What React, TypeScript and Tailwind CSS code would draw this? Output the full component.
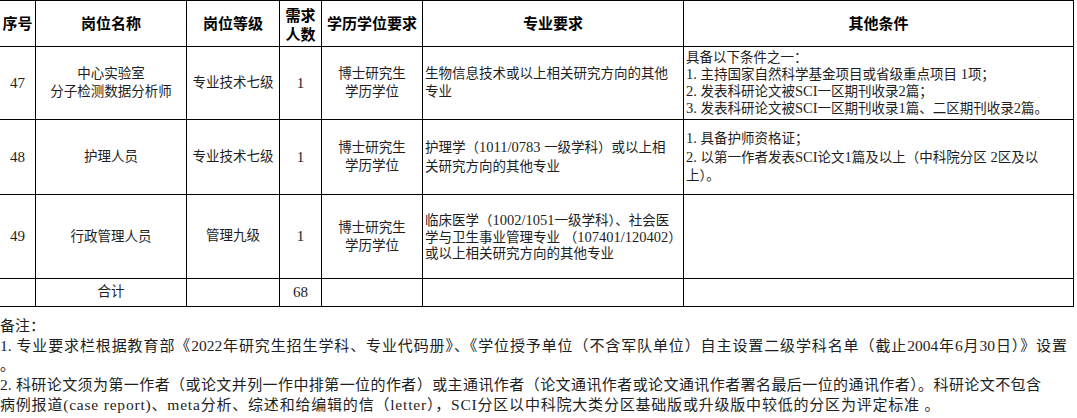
const serif = "font-['Liberation_Serif','Noto_Sans_CJK_SC',serif]";

// half-width latin runs are set a touch larger so they sit level with the CJK text
function Mixed({ text, small }: { text: string; small?: boolean }) {
  const parts = text.split(/([\x20-\x7e]+)/).filter((p) => p !== "");
  return (
    <>
      {parts.map((p, i) =>
        /^[\x20-\x7e]+$/.test(p) ? (
          <span key={i} className={small ? "text-[14.5px] whitespace-pre" : "text-[15.5px] whitespace-pre"}>
            {p}
          </span>
        ) : (
          <span key={i}>{p}</span>
        )
      )}
    </>
  );
}

const rows = [
  {
    no: "47",
    name: ["中心实验室", "分子检测数据分析师"],
    level: "专业技术七级",
    count: "1",
    major: ["生物信息技术或以上相关研究方向的其他", "专业"],
    majorLead: "leading-[18px]",
    other: [
      "具备以下条件之一：",
      "1. 主持国家自然科学基金项目或省级重点项目 1项；",
      "2. 发表科研论文被SCI一区期刊收录2篇；",
      "3. 发表科研论文被SCI一区期刊收录1篇、二区期刊收录2篇。",
    ],
    otherLead: "leading-[16px]",
    h: "h-[73px]",
  },
  {
    no: "48",
    name: ["护理人员"],
    level: "专业技术七级",
    count: "1",
    major: ["护理学（1011/0783 一级学科）或以上相", "关研究方向的其他专业"],
    majorLead: "leading-[19px]",
    other: ["1. 具备护师资格证；", "2. 以第一作者发表SCI论文1篇及以上（中科院分区 2区及以", "上）。"],
    otherLead: "leading-[18px]",
    h: "h-[75px]",
  },
  {
    no: "49",
    name: ["行政管理人员"],
    level: "管理九级",
    count: "1",
    major: [
      "临床医学（1002/1051一级学科）、社会医",
      "学与卫生事业管理专业 （107401/120402）",
      "或以上相关研究方向的其他专业",
    ],
    majorLead: "leading-[16px]",
    other: [],
    otherLead: "leading-[16px]",
    h: "h-[84px]",
  },
];

function Lines({ lines, className = "" }: { lines: string[]; className?: string }) {
  return (
    <div className={className}>
      {lines.map((l, i) => (
        <div key={i} className="whitespace-nowrap">
          <Mixed text={l} small />
        </div>
      ))}
    </div>
  );
}

export default function App() {
  const th = "border border-black font-bold text-center align-middle text-[15px] text-black p-0";
  const td = "border border-black align-middle p-0";

  return (
    <div className={`w-[1077px] h-[418px] overflow-hidden bg-white text-[#1e1e1e] ${serif}`}>
      <table className="-ml-px table-fixed border-collapse w-[1074px]">
        <colgroup>
          <col className="w-[36px]" />
          <col className="w-[151px]" />
          <col className="w-[93px]" />
          <col className="w-[42px]" />
          <col className="w-[101px]" />
          <col className="w-[261px]" />
          <col className="w-[390px]" />
        </colgroup>
        <thead className="font-['Noto_Sans_CJK_SC',sans-serif]">
          <tr className="h-[46px]">
            <th className={th}>序号</th>
            <th className={th}>岗位名称</th>
            <th className={th}>岗位等级</th>
            <th className={`${th} leading-[19px]`}>
              需求
              <br />
              人数
            </th>
            <th className={th}>学历学位要求</th>
            <th className={th}>专业要求</th>
            <th className={th}>其他条件</th>
          </tr>
        </thead>
        <tbody className="text-[13.5px]">
          {rows.map((r) => (
            <tr key={r.no} className={r.h}>
              <td className={`${td} text-center text-[15px]`}>{r.no}</td>
              <td className={`${td} text-center`}>
                <Lines lines={r.name} className="leading-[18px]" />
              </td>
              <td className={`${td} text-center`}>{r.level}</td>
              <td className={`${td} text-center text-[15px]`}>{r.count}</td>
              <td className={`${td} text-center`}>
                <Lines lines={["博士研究生", "学历学位"]} className="leading-[18px]" />
              </td>
              <td className={`${td} pl-[2px]`}>
                <Lines lines={r.major} className={r.majorLead} />
              </td>
              <td className={`${td} pl-[2px]`}>
                <Lines lines={r.other} className={r.otherLead} />
              </td>
            </tr>
          ))}
          <tr className="h-[28px]">
            <td className={td}></td>
            <td className={`${td} text-center`}>合计</td>
            <td className={td}></td>
            <td className={`${td} text-center text-[15px]`}>68</td>
            <td className={td}></td>
            <td className={td}></td>
            <td className={td}></td>
          </tr>
        </tbody>
      </table>

      <div className="mt-[10px] text-[15px] leading-[19px]">
        <div>备注：</div>
        <div className="w-[1067px] text-justify [text-align-last:justify]">
          <Mixed text="1. 专业要求栏根据教育部《2022年研究生招生学科、专业代码册》、《学位授予单位（不含军队单位）自主设置二级学科名单（截止2004年6月30日）》设置" />
        </div>
        <div>。</div>
        <div className="w-[1041px] text-justify [text-align-last:justify]">
          <Mixed text="2. 科研论文须为第一作者（或论文并列一作中排第一位的作者）或主通讯作者（论文通讯作者或论文通讯作者署名最后一位的通讯作者）。科研论文不包含" />
        </div>
        <div className="whitespace-nowrap tracking-[0.8px]">
          <Mixed text="病例报道(case report)、meta分析、综述和给编辑的信（letter），SCI分区以中科院大类分区基础版或升级版中较低的分区为评定标准 。" />
        </div>
      </div>
    </div>
  );
}
